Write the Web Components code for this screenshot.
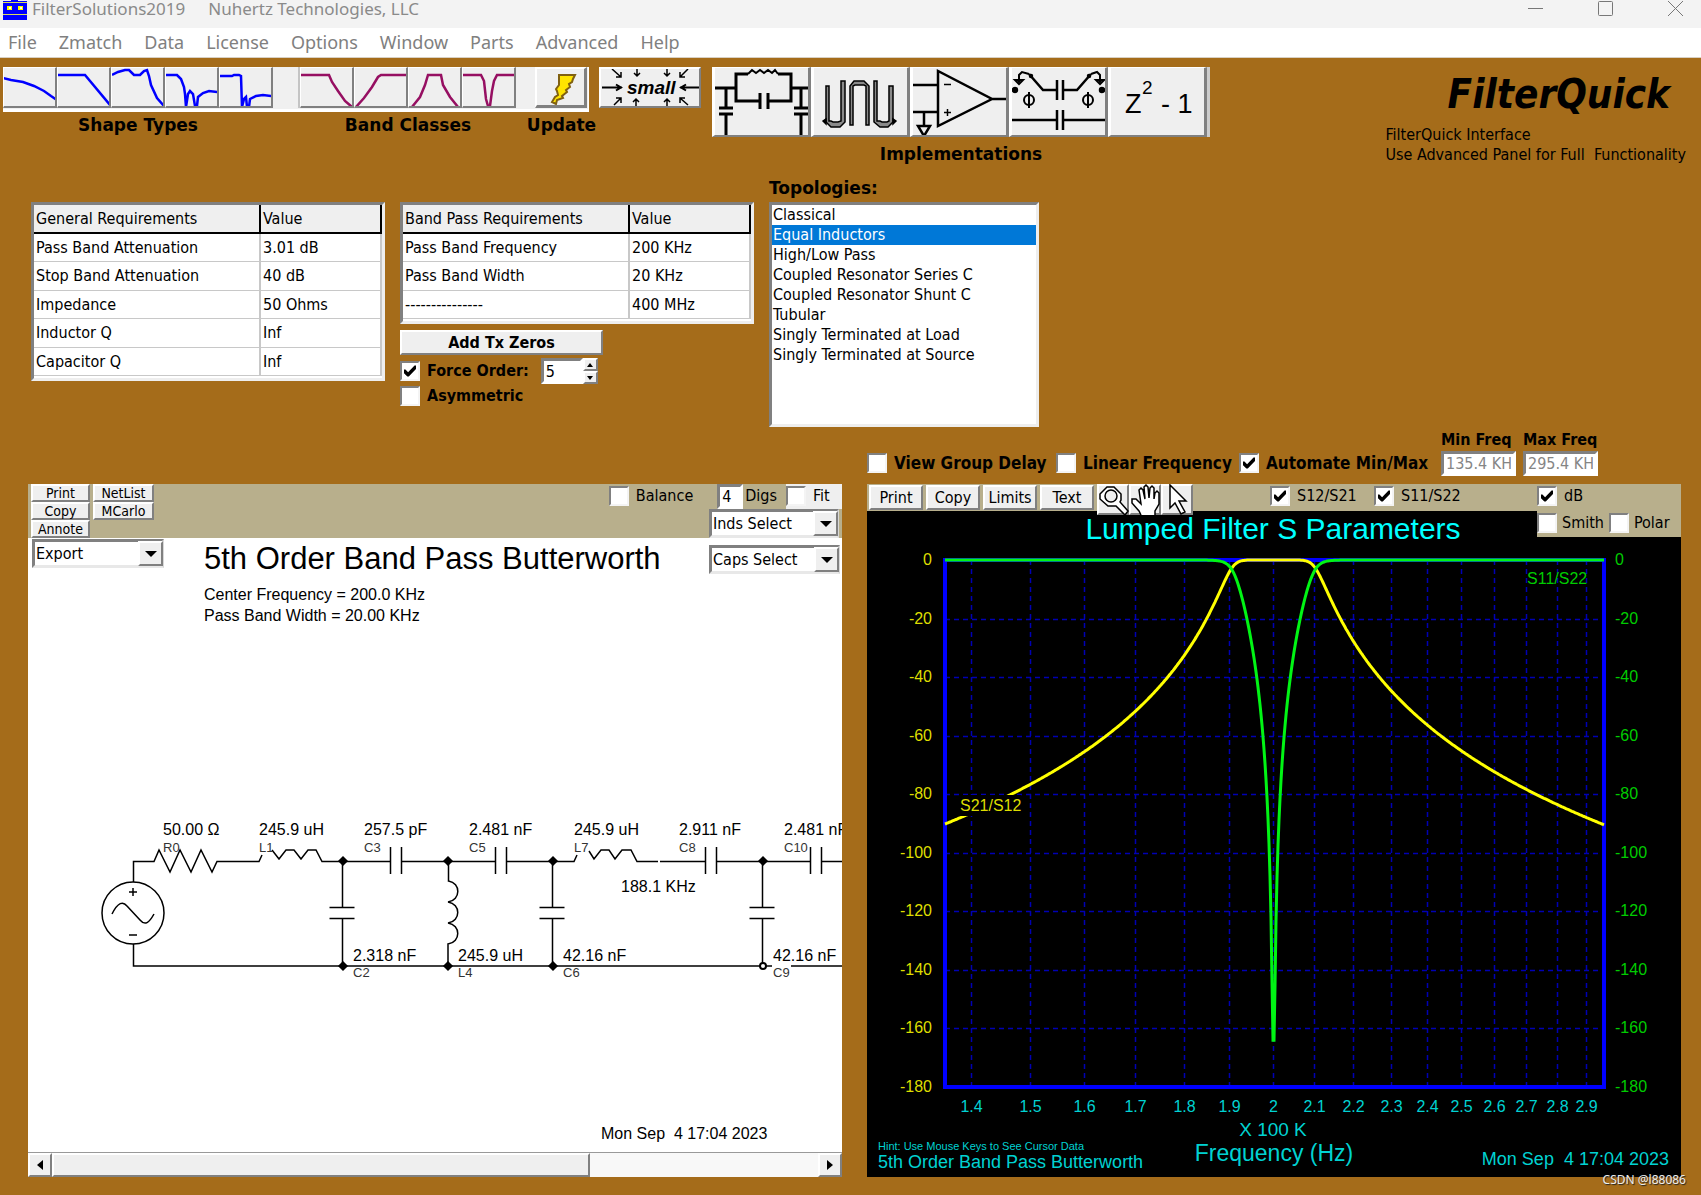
<!DOCTYPE html>
<html lang="en">
<head>
<meta charset="utf-8">
<title>FilterSolutions2019</title>
<style>
html, body { margin: 0; min-height: 100%; }
body {
  background: #a56c1a; color: #000;
  --ui: "DejaVu Sans Condensed", "DejaVu Sans", "Noto Sans", sans-serif;
  --wide: "DejaVu Sans", "Noto Sans", sans-serif;
  --plot: "Liberation Sans", Arial, sans-serif;
  --face: #efefef; --shade: #808080; --khaki: #b8af8c;
  font: 16px/20px var(--ui);
}
</style>
</head>
<body>
<filter-window></filter-window>
<script>
const BASE = `
  *, *::before, *::after { box-sizing: border-box; }
  button, input, select { font: inherit; color: inherit; margin: 0; padding: 0; border-radius: 0; outline: none; }
  button { background: var(--face); border: 2px solid; border-color: #fff var(--shade) var(--shade) #fff; }
  svg { display: block; }
`;
class Part extends HTMLElement {
  connectedCallback() {
    if (this.shadowRoot) return;
    this.attachShadow({ mode: 'open' }).innerHTML = `<style>${BASE}${this.css()}</style>${this.html()}`;
  }
  css() { return ''; }
  html() { return '<slot></slot>'; }
}
const define = (name, css, html) => customElements.define(name, class extends Part {
  css() { return css; }
  html() { return typeof html === 'function' ? html(this) : html; }
});

/* ---------- small controls ---------- */
define('win-button', `
  :host { display: block; }
  button { display: block; width: 100%; height: 100%; white-space: nowrap; line-height: 1; }
`, '<button type="button"><slot></slot></button>');

define('win-check', `
  :host { display: inline-block; }
  label { display: flex; align-items: center; gap: var(--check-gap, 7px); white-space: nowrap; }
  input { appearance: none; flex: none; width: 20px; height: 20px; background: #fff; border: 2px solid;
    border-color: var(--shade) #f4f4f4 #f4f4f4 var(--shade); display: grid; place-items: center; }
  input:checked::before { content: ""; width: 12px; height: 12px; background: #000;
    clip-path: polygon(0 38%, 12% 38%, 34% 60%, 88% 4%, 100% 4%, 100% 34%, 40% 96%, 28% 96%, 0 68%); }
`, el => `<label><input type="checkbox" ${el.hasAttribute('checked') ? 'checked' : ''}><span><slot></slot></span></label>`);

define('win-select', `
  :host { display: block; }
  div { position: relative; }
  select { appearance: none; width: 100%; height: 29px; background: #fff; padding: 0 28px 0 1px; line-height: 20px;
    border: 3px solid; border-color: var(--shade) #d8d8d8 #e8e8e8 var(--shade); }
  i { position: absolute; right: 1px; top: 2px; bottom: 2px; width: 25px; background: var(--face); border: 2px solid;
    border-color: #fff var(--shade) var(--shade) #fff; display: grid; place-items: center; pointer-events: none; }
  i::before { content: ""; border: 6px solid transparent; border-top: 6px solid #000; border-bottom: 0; }
`, el => `<div><select aria-label="${el.getAttribute('value')}"><option>${el.getAttribute('value')}</option></select><i></i></div>`);

define('win-field', `
  :host { display: block; }
  input { display: block; width: 100%; height: 25px; background: #fff; padding: 0 2px; border: 3px solid;
    border-color: var(--shade) #fff #fff var(--shade); }
  input:disabled { color: #858585; -webkit-text-fill-color: #858585; }
`, el => `<input type="text" aria-label="${el.getAttribute('label')}" value="${el.getAttribute('value')}" ${el.hasAttribute('disabled') ? 'disabled' : ''}>`);

/* ---------- title bar and menu ---------- */
define('title-bar', `
  :host { display: flex; align-items: flex-start; height: 28px; background: #f3f3f3; color: #8a8a8a;
    font: 17px/18px "Noto Sans", sans-serif; padding: 0 18px 0 3px; }
  .name { margin: 0 23px 0 5px; }
  nav { margin-left: auto; display: flex; gap: 55px; }
  button { border: 0; background: none; width: 15px; height: 16px; }
`, `
  <svg width="24" height="20" viewBox="0 0 24 20"><path fill="#00f" d="M0 0H24V20H0z"/><path fill="#ff0" d="M4 6h5v4H4zM15 6h5v4h-5z"/><path stroke="#dcdc5a" d="M0 2.500H24M0 14.500H24"/><path fill="#fff" d="M6 7h2v2H6zM17 7h2v2h-2z"/><path stroke="#f3f3f3" d="M0 .5H8M15 .5H24"/></svg>
  <span class="name">FilterSolutions2019</span><span>Nuhertz Technologies, LLC</span>
  <nav>
    <button type="button" aria-label="Minimize"><svg width="15" height="16"><path d="M0 8.500H15" stroke="#777"/></svg></button>
    <button type="button" aria-label="Maximize"><svg width="15" height="16"><rect x=".5" y="1.500" width="14" height="14" rx="1" fill="none" stroke="#777"/></svg></button>
    <button type="button" aria-label="Close"><svg width="15" height="16"><path d="M0 1L15 16M15 1L0 16" stroke="#777"/></svg></button>
  </nav>`);

define('menu-bar', `
  :host { display: flex; gap: 22px; align-items: center; height: 30px; padding: 0 8px; background: #fff; border-bottom: 1px solid #d8d0c4;
    font: 18px/24px "Noto Sans", sans-serif; }
  a { color: #808080; text-decoration: none; padding-bottom: 2px; }
`, ['File', 'Zmatch', 'Data', 'License', 'Options', 'Window', 'Parts', 'Advanced', 'Help'].map(t => `<a href="#">${t}</a>`).join(''));

/* ---------- toolbars ---------- */
const curve = (label, color, pts) => `<button type="button" aria-label="${label}"><svg width="54" height="41" viewBox="0 0 54 41"><polyline points="${pts}" fill="none" stroke="${color}" stroke-width="2.500"/></svg></button>`;
const BLUE = '#0000ff', PLUM = '#960f62';
define('shape-bar', `
  :host { display: block; }
  .strip, .labels { display: grid; grid-template-columns: 270px 27px 216px 19px 53px; }
  .strip { background: #f0f0f0; height: 45px; border: 0 solid #fff; border-width: 0 1px 3px 0; }
  .set { display: flex; }
  button { width: 54px; height: 41px; border-width: 1px 2px 2px 1px; overflow: hidden; }
  button svg { margin: -1px; }
  .gap { border-right: 2px solid #c4c4c4; height: 41px; }
  .labels { font: bold 17px/20px var(--wide); margin-top: 3px; }
  .labels span { display: flex; justify-content: center; white-space: nowrap; }
  .up { border-width: 2px 3px 3px 2px; width: 52px; }
`, `
  <div class="strip">
    <div class="set">
      ${curve('Gaussian', BLUE, '0,11 8,13 20,15 31,19 41,24 48,29 54,33')}
      ${curve('Butterworth', BLUE, '1,8 28,8 53,38')}
      ${curve('Chebyshev', BLUE, '1,8 7,5 14,3 18,3 23,8 29,8 33,4 36,3 38,9 40,18 46,31 53,39')}
      ${curve('Inverse Chebyshev', BLUE, '1,8 12,8 16,12 19,20 20,27 21,40 23,27 25,24 28,27 30,39 32,39 33,30 38,26 44,24 53,25')}
      ${curve('Elliptic', BLUE, '0,9 13,9 15,8 20,8 22,9 23,40 25,32 27,30 28,40 30,40 31,32 37,29 44,28 53,29')}
    </div><div class="gap"></div>
    <div class="set">
      ${curve('Low pass', PLUM, '1,8 29,8 32,15 38,24 45,34 52,40')}
      ${curve('High pass', PLUM, '2,40 10,31 18,20 24,10 27,8 54,8')}
      ${curve('Band pass', PLUM, '4,40 12,30 17,18 20,8 33,8 35,18 42,30 50,40')}
      ${curve('Band stop', PLUM, '0,8 19,8 22,14 24,32 26,39 28,39 30,24 32,14 35,8 54,8')}
    </div><div></div>
    <button type="button" class="up" aria-label="Update"><svg width="50" height="40" viewBox="0 0 50 40"><path d="M23 7H39L37 11L36 14L33 16L34 19L30 22L31 24L26 28L27 30L21 32L20 36L16 34L19 29L22 27L21 23L20 21L23 17Z" fill="#ffe400" stroke="#806010" stroke-width="2"/></svg></button>
  </div>
  <div class="labels"><span>Shape Types</span><span></span><span>Band Classes</span><span></span><span>Update</span></div>`);

define('small-button', `
  :host { display: block; }
  button { width: 102px; height: 41px; overflow: hidden; }
  svg { margin: -2px; }
  text { font: italic bold 19px var(--plot); }
`, `<button type="button" aria-label="Small"><svg width="102" height="41" viewBox="0 0 102 41" fill="none" stroke="#000" stroke-width="1.500">
  <path d="M3 20.500H23M17 17.500L22 20.500L17 23.500M101 20.500H81M87 17.500L82 20.500L87 23.500" stroke-width="2"/>
  <path d="M13 2L22 10M22 5V10H17M38 2V9M35 6L38 9L41 6M68 2V9M65 6L68 9L71 6M89 2L81 10M81 5V10H86M15 38L22 31M22 36V31H17M37 39V32M34 35L37 32L40 35M68 39V32M65 35L68 32L71 35M89 38L81 31M81 36V31H86"/>
  <text x="28" y="27" fill="#000" stroke="none">small</text></svg></button>`);

define('implementation-bar', `
  :host { display: block; }
  .strip { display: grid; grid-template-columns: repeat(5, 99px) 3px; height: 70px; background: linear-gradient(90deg, #fff, #ccc); }
  button { height: 70px; border-width: 1px 3px 2px 3px; overflow: hidden; }
  svg { margin: -1px -3px; }
  text { font: 27px var(--plot); }
  .sup { font-size: 19px; }
  p { margin: 7px 0 0; font: bold 17px/20px var(--wide); text-align: center; }
`, `
  <div class="strip">
  <button type="button" aria-label="Lumped"><svg width="99" height="70" viewBox="0 0 99 70" fill="none" stroke="#000" stroke-width="3">
    <path d="M3 21H24M79 21H99M36 7H24V34H48M56 34H79V7H66M48 26V42M56 26V42M14 21V40M7 41H21M7 47H21M14 47V70M89 21V40M82 41H96M82 47H96M89 47V70"/>
    <path d="M36 7L40 3L44 6L48 3L52 6L56 3L60 6L63 3L66 7" stroke-width="2"/></svg></button>
  <button type="button" aria-label="Distributed"><svg width="99" height="70" viewBox="0 0 99 70" fill="#8a8a8a" stroke="#000" stroke-width="1.500">
    <path d="M15 19H18V54H20L22 55H27L30 54V14H34V55L29 60H20L15 55ZM39 58V19L43 14H53L58 19V58H55V19L53 18H44L42 19V58ZM63 14H66V54H69L71 55H76L78 54V19H82V55L77 60H69L63 55Z"/>
    <path d="M12 54L15 57V52ZM85 54L82 57V52Z" fill="#000"/></svg></button>
  <button type="button" aria-label="Active"><svg width="99" height="70" viewBox="0 0 99 70" fill="none" stroke="#000" stroke-width="2.500">
    <path d="M28 4V59L82 32ZM82 32H99M2 18H28M2 45H28M14 45V59M8 59H20L14 69Z"/><path d="M34 17.500H41M34 45.500H41M37.500 42V49" stroke-width="1.500"/></svg></button>
  <button type="button" aria-label="Switched capacitor"><svg width="99" height="70" viewBox="0 0 99 70" fill="none" stroke="#000" stroke-width="2.500">
    <path d="M3 53H48M54 53H99M48 43V63M54 43V63M48 13V33M54 13V33M48 23H34L20 7M54 23H68L82 7M3 23H7M92 23H99"/>
    <path d="M20 7L13 5L10 8V15M6 13L10 17L14 13ZM82 7L88 5L91 8V15M87 13L91 17L95 13Z" stroke-width="2"/>
    <path d="M20 25V41M79 25V41" stroke-width="2"/><circle cx="20" cy="33" r="5" stroke-width="2"/><circle cx="79" cy="33" r="5" stroke-width="2"/>
    <circle cx="6" cy="23" r="2"/><circle cx="93" cy="23" r="2"/><circle cx="22" cy="9" r="1"/><circle cx="80" cy="9" r="1"/></svg></button>
  <button type="button" aria-label="Digital"><svg width="99" height="70" viewBox="0 0 99 70"><text x="17" y="46">Z</text><text class="sup" x="34" y="27">2</text><text x="53" y="46">- 1</text></svg></button>
  </div>
  <p>Implementations</p>`);

define('brand-block', `
  :host { display: block; }
  h1 { margin: 0 16px 0 0; font: italic bold 40px/46px var(--ui); text-align: right; }
  p { margin: 8px 0 0; line-height: 20px; white-space: pre; }
`, `<h1>FilterQuick</h1><p>FilterQuick Interface
Use Advanced Panel for Full  Functionality</p>`);

/* ---------- requirement tables ---------- */
define('req-table', `
  :host { display: block; width: 354px; background: #fff; border: 3px solid; border-color: var(--shade) #eee #eee var(--shade); padding-bottom: 2px; }
  table { width: 100%; border-collapse: separate; border-spacing: 0; table-layout: fixed; }
  th, td { text-align: left; font-weight: normal; padding: 0 3px 0 2px; height: 28px; line-height: 20px; white-space: nowrap; overflow: hidden;
    border: solid #c8c8c8; border-width: 0 2px 1px 0; }
  th { height: 29px; background: var(--face); border-color: #000; border-width: 0 2px 2px 0; }
  tbody tr:nth-child(even) td { height: 29px; }
  th:first-child { width: 227px; }
`, el => {
  const [head, ...rows] = el.getAttribute('rows').split(';').map(r => r.split('|'));
  return `<table><thead><tr>${head.map(c => `<th scope="col">${c}</th>`).join('')}</tr></thead>
  <tbody>${rows.map(r => `<tr>${r.map(c => `<td>${c}</td>`).join('')}</tr>`).join('')}</tbody></table>`;
});

define('order-controls', `
  :host { display: block; width: 203px; margin-top: 6px; }
  win-button { height: 25px; font-weight: bold; }
  .row { display: flex; align-items: center; gap: 12px; height: 26px; margin-top: 3px; font-weight: bold; }
  .spin { display: flex; height: 26px; font-weight: normal; }
  input { appearance: textfield; width: 42px; height: 26px; background: #fff; border: 3px solid; border-color: var(--shade) #fff #fff var(--shade); padding-left: 2px; }
  input::-webkit-inner-spin-button { display: none; }
  .arrows { display: grid; width: 15px; }
  .arrows button { height: 13px; display: grid; place-items: center; }
  .arrows i { border: 3px solid transparent; border-bottom: 4px solid #000; border-top: 0; }
  .arrows .down { transform: rotate(180deg); }
  .last { margin-top: 0; height: 24px; }
`, `
  <win-button>Add Tx Zeros</win-button>
  <div class="row"><win-check checked>Force Order:</win-check>
    <div class="spin"><input type="number" value="5" aria-label="Order"><div class="arrows"><button type="button" aria-label="Up"><i></i></button><button type="button" aria-label="Down"><i class="down"></i></button></div></div></div>
  <div class="row last"><win-check>Asymmetric</win-check></div>`);

define('topology-list', `
  :host { display: block; width: 270px; }
  label { display: block; font: bold 17px/20px var(--wide); margin-bottom: 4px; }
  select { display: block; width: 100%; height: 225px; background: #fff; border: 3px solid; border-color: var(--shade) #eee #eee var(--shade); overflow: hidden; }
  option { padding: 0 1px; height: 20px; min-height: 0; line-height: 20px; color: #000; }
  option:checked { background: #0078d7 linear-gradient(#0078d7, #0078d7); color: #fff; }
`, `<label for="t">Topologies:</label><select id="t" size="11">${['Classical', 'Equal Inductors', 'High/Low Pass', 'Coupled Resonator Series C', 'Coupled Resonator Shunt C', 'Tubular', 'Singly Terminated at Load', 'Singly Terminated at Source'].map((t, i) => `<option${i === 1 ? ' selected' : ''}>${t}</option>`).join('')}</select>`);

/* ---------- schematic panel ---------- */
const node = (x, y) => `<path d="M${x - 4} ${y}L${x} ${y - 4}L${x + 4} ${y}L${x} ${y + 4}Z" fill="#000"/>`;
const shuntCap = x => `<path d="M${x} 861V907M${x - 13} 907.500H${x + 12}M${x - 13} 918.500H${x + 12}M${x} 918V966"/>`;
const part = (x, y, value, name) => `<text x="${x}" y="${y}">${value}</text><text class="s" x="${x}" y="${y + (y < 900 ? 17 : 16)}">${name}</text>`;
define('circuit-canvas', `
  :host { display: block; background: #fff; }
  svg { width: 100%; height: auto; }
  text { font: 16px var(--plot); fill: #000; stroke: none; white-space: pre; }
  .s { font-size: 13px; fill: #333; }
  .t { font-size: 31px; }
`, () => `<svg viewBox="28 538 814 614" fill="none" stroke="#000" stroke-width="1.500">
  <text class="t" x="204" y="569">5th Order Band Pass Butterworth</text>
  <text x="204" y="600">Center Frequency = 200.0 KHz</text>
  <text x="204" y="621">Pass Band Width = 20.00 KHz</text>
  <circle cx="133" cy="913" r="31"/>
  <path d="M129 892H137M133 888V896M129 935H137M112 914C118 902 123 901 127 906L140 920C145 926 149 923 154 914"/>
  <path d="M133.500 882V861.500H154L159 850L170 872L180 850L191 872L201 850L212 872L217 861.500H259L262 855M272 850L279 859L286 850H294L301 859L308 850H316L322 861.500H390M390.500 847V874M401.500 847V874M401 861.500H495M495.500 847V874M506.500 847V874M506 861.500H574L577 855M589 851L594 859L601 850H609L615 859L622 850H631L637 861.500H658M660 861.500H705M705.500 847V874M716.500 847V874M716 861.500H810M810.500 847V874M821.500 847V874M821 861.500H842"/>
  <path d="M133.500 944V966H772M791 966H842"/>
  ${shuntCap(342.5)}${shuntCap(552.5)}${shuntCap(762.5)}
  <path d="M448.500 861V881C461 883 461 900 448 902C461 904 461 921 448 923C461 925 461 942 448 944V966"/>
  ${node(343, 861)}${node(448, 861)}${node(553, 861)}${node(763, 861)}${node(343, 966)}${node(448, 966)}${node(553, 966)}
  <circle cx="763" cy="966" r="3" fill="#fff" stroke-width="2"/>
  ${part(163, 835, '50.00 Ω', 'R0')}${part(259, 835, '245.9 uH', 'L1')}${part(364, 835, '257.5 pF', 'C3')}${part(469, 835, '2.481 nF', 'C5')}
  ${part(574, 835, '245.9 uH', 'L7')}${part(679, 835, '2.911 nF', 'C8')}${part(784, 835, '2.481 nF', 'C10')}
  <text x="621" y="892">188.1 KHz</text>
  ${part(353, 961, '2.318 nF', 'C2')}${part(458, 961, '245.9 uH', 'L4')}${part(563, 961, '42.16 nF', 'C6')}${part(773, 961, '42.16 nF', 'C9')}
  <text x="601" y="1139">Mon Sep  4 17:04 2023</text></svg>`);

define('scroll-strip', `
  :host { display: grid; grid-template-columns: 24px 537fr 228fr 24px; height: 25px; background: #f8f8f8; border-top: 1px solid #999; }
  button { display: grid; place-items: center; }
  i { border: 5px solid transparent; border-right: 6px solid #000; border-left: 0; }
  .r { border-right: 0; border-left: 6px solid #000; }
  .thumb { background: var(--face); border: 2px solid; border-color: #fff var(--shade) var(--shade) #fff; }
`, `<button type="button" aria-label="Scroll left"><i></i></button><div class="thumb"></div><div></div><button type="button" aria-label="Scroll right"><i class="r"></i></button>`);

define('schematic-panel', `
  :host { display: block; position: relative; }
  .bar { display: flex; justify-content: space-between; height: 54px; background: var(--khaki); padding: 0 0 0 3px; }
  .btns { display: grid; grid-template-columns: 59px 61px; grid-auto-rows: 18px; column-gap: 3px; font-size: 14px; }
  .btns win-button:last-child { grid-row: 3; }
  .right { display: flex; flex-direction: column; align-items: flex-end; }
  .line { display: flex; align-items: flex-start; height: 25px; }
  .line win-check { margin-top: 2px; }
  .digs { display: flex; gap: 2px; margin: 0 9px 0 24px; line-height: 24px; }
  .digs win-field { width: 26px; }
  .fit { background: #efefef; width: 56px; height: 25px; }
  .right win-select { width: 130px; margin-right: 3px; }
  .export, .caps { position: absolute; top: 55px; }
  .export { left: 4px; width: 132px; }
  .caps { right: 2px; top: 61px; width: 131px; }
`, `
  <div class="bar">
    <div class="btns"><win-button>Print</win-button><win-button>NetList</win-button><win-button>Copy</win-button><win-button>MCarlo</win-button><win-button>Annote</win-button></div>
    <div class="right">
      <div class="line"><win-check>Balance</win-check><div class="digs"><win-field label="Digs" value="4"></win-field><span>Digs</span></div><div class="fit"><win-check>Fit</win-check></div></div>
      <win-select value="Inds Select"></win-select>
    </div>
  </div>
  <circuit-canvas></circuit-canvas>
  <win-select class="export" value="Export"></win-select>
  <win-select class="caps" value="Caps Select"></win-select>
  <scroll-strip></scroll-strip>`);

/* ---------- S-parameter chart ---------- */
const FMIN = 135.4, FMAX = 295.4, F0 = 200, BW = 20, L = 945, R = 1604, T = 560, B = 1087;
const px = f => L - 1 + (R - L) * Math.log(f / FMIN) / Math.log(FMAX / FMIN);
const py = db => T - db * (B - T) / 180;
function trace(fn) {
  const pts = [];
  for (let x = L; x <= R; x += 1) {
    const f = FMIN * Math.pow(FMAX / FMIN, (x - L + 1) / (R - L));
    const w = Math.pow(Math.abs((f / F0 - F0 / f) * F0 / BW), 10);
    pts.push(x + ',' + Math.round(py(Math.max(-164, fn(w))) * 10) / 10);
  }
  return pts.join(' ');
}
define('response-chart', `
  :host { display: block; background: #000; }
  svg { width: 100%; height: auto; }
  text { font: 16px var(--plot); stroke: none; fill: #00d2d2; white-space: pre; }
  .mid { text-anchor: middle; } .end { text-anchor: end; }
  .y { fill: #dede00; } .g { fill: #00cc00; } .b { font-size: 18px; }
`, () => {
  let grid = '', labels = '';
  for (let f = 140; f <= 290; f += 10) {
    const x = Math.round(px(f)) - 0.5;
    grid += `M${x} ${T}V${B}`;
    labels += `<text class="mid" x="${x}" y="1112">${f / 100}</text>`;
  }
  for (let d = 0; d >= -180; d -= 20) {
    const y = Math.round(py(d));
    if (d && d > -180) grid += `M${L} ${y}.5H${R}`;
    labels += `<text class="end y" x="932" y="${y + 5}">${d}</text><text class="g" x="1615" y="${y + 5}">${d}</text>`;
  }
  return `<svg viewBox="867 511 814 666" fill="none">
  <path d="${grid}" stroke="#0000b4" stroke-width="1.500" stroke-dasharray="5 4"/>
  <rect x="${L}" y="${T}" width="${R - L}" height="${B - T}" stroke="#00f" stroke-width="4"/>
  <polyline points="${trace(w => -10 * Math.log10(1 + w))}" stroke="#ff0" stroke-width="3"/>
  <polyline points="${trace(w => 10 * Math.log10(w / (1 + w) + 1e-18))}" stroke="#00f514" stroke-width="3"/>
  <rect x="959" y="795" width="62" height="21" fill="#000"/>
  <text class="y" x="960" y="811">S21/S12</text><text class="g" x="1527" y="584">S11/S22</text>
  ${labels}
  <text class="mid" x="1273" y="539" style="font-size:30px;fill:#0ff">Lumped Filter S Parameters</text>
  <text class="mid" x="1273" y="1136" style="font-size:19px">X 100 K</text>
  <text class="mid" x="1274" y="1161" style="font-size:23px">Frequency (Hz)</text>
  <text x="878" y="1150" style="font-size:11px">Hint: Use Mouse Keys to See Cursor Data</text>
  <text class="b" x="878" y="1168">5th Order Band Pass Butterworth</text>
  <text class="b end" x="1669" y="1165">Mon Sep  4 17:04 2023</text></svg>`;
});

define('chart-panel', `
  :host { display: block; position: relative; }
  .bar { display: flex; align-items: flex-start; height: 27px; background: var(--khaki); padding-left: 2px; }
  .text win-button { width: 54px; height: 25px; }
  .text { display: flex; gap: 3px; padding-top: 1px; }
  .icons { display: flex; position: relative; margin-left: 3px; }
  .icons button { width: 32px; height: 31px; }
  .icons svg { margin: -2px; }
  .checks { display: grid; grid-template-columns: 104px 163px 144px; margin: 2px 0 0 auto; }
  .more { --check-gap: 5px; position: absolute; right: 0; top: 27px; width: 144px; height: 26px; background: var(--khaki); display: flex; gap: 5px; padding: 2px 0 0; }
`, `
  <div class="bar">
    <div class="text"><win-button>Print</win-button><win-button>Copy</win-button><win-button>Limits</win-button><win-button>Text</win-button></div>
    <div class="icons">
      <button type="button" aria-label="Zoom"><svg width="32" height="31" viewBox="0 0 32 31" fill="#fff" stroke="#000" stroke-width="1.500"><path d="M10 3H17L24 10V16L23 18L31 27L28 31L19 22H11L3 15V10Z"/><circle cx="14" cy="12" r="6" fill="#efefef"/></svg></button>
      <button type="button" aria-label="Pan"><svg width="32" height="31" viewBox="0 0 32 31" fill="#fff" stroke="#000" stroke-width="1.500"><path d="M12 31L10 27L3 19V15H7L12 20L10 6L12 4L14 6L16 15L15 3L17 1L19 3L20 14L21 4L23 2L25 4V15L26 9L28 7L30 9V20L26 27V31"/></svg></button>
      <button type="button" aria-label="Pointer"><svg width="32" height="31" viewBox="0 0 32 31" fill="#fff" stroke="#000" stroke-width="1.500"><path d="M9 1V24L14 19L20 30L24 28L18 17H25Z"/></svg></button>
    </div>
    <div class="checks"><win-check checked>S12/S21</win-check><win-check checked>S11/S22</win-check><win-check checked>dB</win-check></div>
  </div>
  <response-chart></response-chart>
  <div class="more"><win-check>Smith</win-check><win-check>Polar</win-check></div>`);

define('view-options', `
  :host { display: flex; align-items: flex-end; height: 41px; font-weight: bold; margin: 8px 0; }
  .c { display: grid; grid-template-columns: 189px 183px 202px; padding-bottom: 3px; font-size: 17px; }
  label { display: block; width: 82px; white-space: nowrap; line-height: 16px; }
  win-field { width: 75px; font-weight: normal; margin-top: 3px; }
`, `
  <div class="c"><win-check>View Group Delay</win-check><win-check>Linear Frequency</win-check><win-check checked>Automate Min/Max</win-check></div>
  <label>Min Freq<win-field label="Min Freq" value="135.4 KH" disabled></win-field></label>
  <label>Max Freq<win-field label="Max Freq" value="295.4 KH" disabled></win-field></label>`);

/* ---------- window ---------- */
define('filter-window', `
  :host { display: block; position: relative; padding-bottom: 18px; }
  .tools { display: flex; align-items: flex-start; padding: 9px 15px 0 3px; height: 120px; }
  small-button { margin: 0 11px 0 10px; }
  brand-block { margin-left: auto; padding-top: 4px; }
  .reqs { display: grid; grid-template-columns: 354px 354px 270px; gap: 15px; padding: 0 31px; align-items: start; }
  .reqs > :nth-child(-n+2) { margin-top: 24px; }
  .panels { display: grid; grid-template-columns: 1fr 1fr; column-gap: 25px; padding: 0 20px 0 28px; }
  view-options { grid-column: 2; }
  schematic-panel { grid-column: 1; }
  .mark { position: absolute; right: 15px; bottom: 7px; font: 12px/16px "Noto Sans", sans-serif; color: #eee; text-shadow: 1px 1px 1px #222; }
`, `
  <title-bar></title-bar>
  <menu-bar></menu-bar>
  <div class="tools"><shape-bar></shape-bar><small-button></small-button><implementation-bar></implementation-bar><brand-block></brand-block></div>
  <div class="reqs">
    <req-table rows="General Requirements|Value;Pass Band Attenuation|3.01 dB;Stop Band Attenuation|40 dB;Impedance|50 Ohms;Inductor Q|Inf;Capacitor Q|Inf"></req-table>
    <div><req-table rows="Band Pass Requirements|Value;Pass Band Frequency|200 KHz;Pass Band Width|20 KHz;---------------|400 MHz"></req-table><order-controls></order-controls></div>
    <topology-list></topology-list>
  </div>
  <div class="panels"><view-options></view-options><schematic-panel></schematic-panel><chart-panel></chart-panel></div>
  <span class="mark">CSDN @l88086</span>`);
</script>
</body>
</html>
